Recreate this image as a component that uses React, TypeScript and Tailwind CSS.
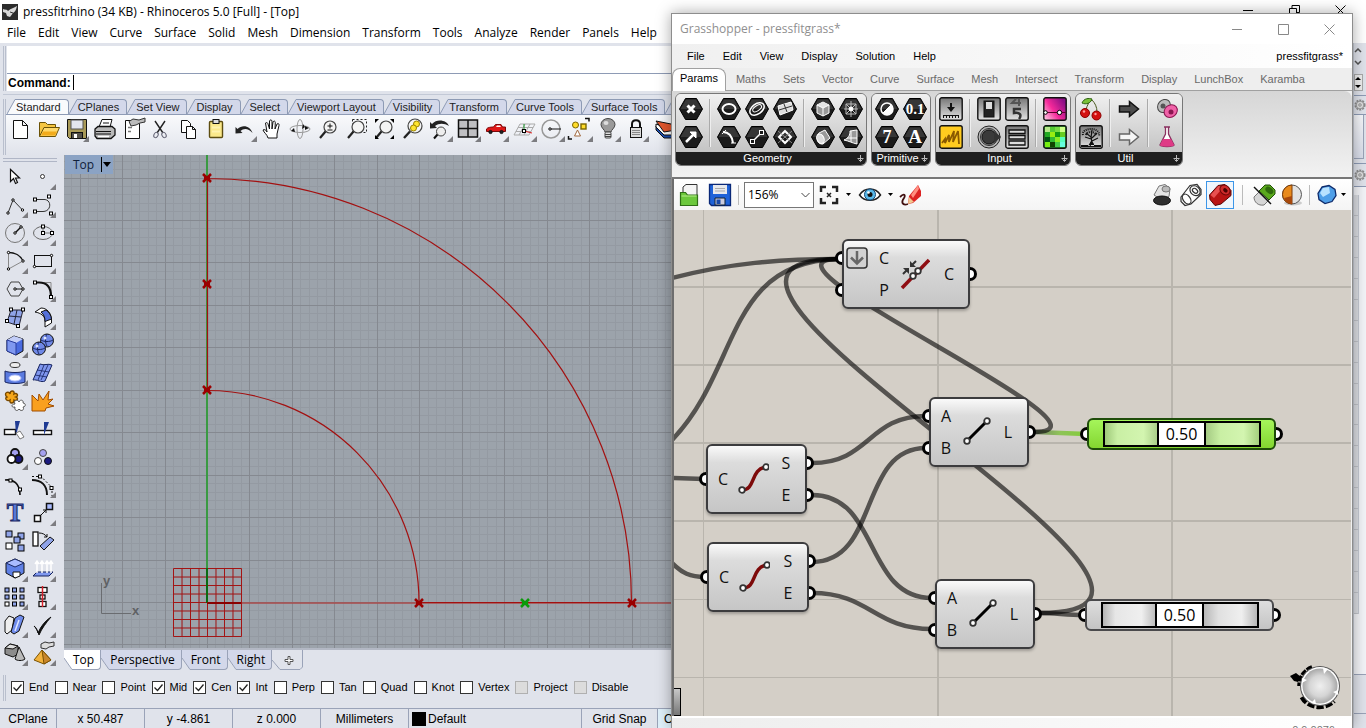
import React from "react";

const UI = "font-['Open_Sans','Noto_Sans',sans-serif]";
const ARIAL = "font-['Liberation_Sans',Arial,sans-serif]";

const Glyph: React.FC<{ children: React.ReactNode; more?: boolean }> = ({ children, more }) => (
  <svg viewBox="0 0 28 28" className="size-7 shrink-0" fill="none" stroke="#111" strokeWidth="1">
    {children}
    {more && <path d="M27 21v6h-6z" fill="#7c7c80" stroke="none" />}
  </svg>
);

interface Tool {
  name: string;
  icon: React.ReactNode;
  more?: boolean;
}

const sq = (x: number, y: number, fill = "#fff", s = 3) => (
  <rect x={x - s / 2} y={y - s / 2} width={s} height={s} fill={fill} stroke="#000" />
);
const dot = (x: number, y: number) => <circle cx={x} cy={y} r="1.2" fill="#fff" stroke="#000" />;

const lens = (
  <>
    <circle cx="16" cy="12" r="6" fill="#f4f4f4" stroke="#444" strokeWidth="1.2" />
    <path d="M11.500 16.500 6 23" stroke="#222" strokeWidth="2.2" />
  </>
);

const standardTools: Tool[] = [
  { name: "New", icon: <path d="M7.500 5.500h9l5 5v13h-14zM16.500 5.500v5h5" fill="#fff" /> },
  {
    name: "Open",
    icon: (
      <>
        <path d="M5.500 21.500v-14h6l2 2h8v3" fill="#f5c542" stroke="#6b5207" />
        <path d="M5.500 21.500 10 12.500h15.500l-4 9z" fill="#ffd96a" stroke="#6b5207" />
        <path d="M7 20.500h14l2-4H9z" fill="#f2ab1c" stroke="none" />
      </>
    ),
  },
  {
    name: "Save",
    more: true,
    icon: (
      <>
        <path d="M5.500 4.500h19v19h-17l-2-2z" fill="#a99a58" />
        <rect x="9" y="5" width="12" height="9" fill="#e3e6ee" stroke="#555" />
        <rect x="9.500" y="17.500" width="11" height="6" fill="#55524a" />
        <path d="M12 19v4h3v-4z" fill="#fff" stroke="none" />
      </>
    ),
  },
  {
    name: "Print",
    icon: (
      <>
        <path d="M9 12 12 4.500h10L20 12" fill="#fff" />
        <path d="M5 14 8 11.500h14l3 2.500v6l-4 3.500H7L5 21z" fill="#b9b9b9" strokeWidth="1.300" />
        <path d="M6 16.500h15M6 19h15M13 8h6" />
        <path d="M8 21.500h11" stroke="#fff" strokeWidth="1.500" />
      </>
    ),
  },
  {
    name: "Properties",
    icon: (
      <>
        <path d="M7.500 5.500h9v3h5v15h-14z" fill="#fff" />
        <path d="M11 6.500l4-2.500 6 1 6-2v4l-5 1-4 2-5 1z" fill="#bbb" stroke="#333" />
        <path d="M10 12.500h4M10 16.500h3" stroke="#777" strokeWidth="1.500" />
      </>
    ),
  },
  {
    name: "Cut",
    icon: (
      <>
        <path d="M9 6l8 12M19 6l-8 12" stroke="#222" strokeWidth="1.400" />
        <ellipse cx="10" cy="20" rx="2" ry="2.800" stroke="#667" transform="rotate(30 10 20)" />
        <ellipse cx="18" cy="20" rx="2" ry="2.800" stroke="#667" transform="rotate(-30 18 20)" />
      </>
    ),
  },
  {
    name: "Copy",
    icon: (
      <>
        <path d="M7.500 5.500h6l3 3v9h-9z" fill="#fff" />
        <path d="M12.500 11.500h6l3 3v9h-9zM18.500 11.500v3h3" fill="#fff" />
      </>
    ),
  },
  {
    name: "Paste",
    icon: (
      <>
        <rect x="7.500" y="6.500" width="13" height="16" rx="1" fill="#fbe98b" stroke="#5d4d10" strokeWidth="1.400" />
        <rect x="11" y="4.500" width="6" height="4" fill="#ddd" />
        <path d="M10 12.500h8M10 16.500h8" stroke="#fff3b0" strokeWidth="2" />
      </>
    ),
  },
  {
    name: "Undo",
    more: true,
    icon: <path d="M5.500 12v6.500l7-.5-2-2c3-3 8-3 12 2-2-7-10-9-15-4z" fill="#222" stroke="none" />,
  },
  {
    name: "Pan",
    icon: (
      <path
        d="M10 23c-1-4-4-5-5-8 1.500-1 3 0 4 2L7.500 8c1.500-1 2.300 0 2.500 1l1.500 5V6c.5-1.500 2-1.500 2.500 0v8l1-7c1-1.500 2.300-1 2.300.5L17 14l2-5c1.500-1 2.300 0 2 1.500L19 19v4z"
        fill="#fff"
      />
    ),
  },
  {
    name: "Rotate view",
    icon: (
      <>
        <ellipse cx="14" cy="14" rx="10" ry="3.500" stroke="#999" />
        <ellipse cx="14" cy="14" rx="3" ry="9.500" stroke="#999" />
        <path d="M23 13l-4-2v4zM17 9l-1 5 3-2zM5 16l4 1-1-4z" fill="#111" stroke="none" />
      </>
    ),
  },
  {
    name: "Zoom",
    icon: (
      <>
        {lens}
        <path d="M16 8.500v5M13.500 11h5M13.500 15h5" />
      </>
    ),
  },
  {
    name: "Zoom window",
    icon: (
      <>
        <rect x="10.500" y="4.500" width="14" height="13" strokeDasharray="2 2" stroke="#222" />
        {lens}
      </>
    ),
  },
  {
    name: "Zoom extents",
    icon: (
      <>
        {lens}
        <path d="M5 8V4h4zM20 4h4v4zM24 20v4h-4zM5 20v4h4z" fill="#000" stroke="none" />
      </>
    ),
  },
  {
    name: "Zoom selected",
    icon: (
      <>
        <circle cx="17" cy="11" r="7" fill="#f4f4f4" stroke="#444" strokeWidth="1.200" />
        <path d="M12 16.500 6 23" stroke="#222" strokeWidth="2.400" />
        <circle cx="18.500" cy="9" r="3" fill="#ffe52e" stroke="#9a8200" />
        <circle cx="15.500" cy="13" r="3" fill="#ffe52e" stroke="#9a8200" />
      </>
    ),
  },
  {
    name: "Undo view",
    more: true,
    icon: (
      <>
        <path d="M4 7v6.500l7-.5-2-2c4-3 9-3 14 0-2-6-12-8-17-2z" fill="#222" stroke="none" />
        <circle cx="15" cy="16.500" r="4.500" fill="#eee" stroke="#444" />
        <path d="M11.500 19.500 8 23.500" strokeWidth="2" />
      </>
    ),
  },
  {
    name: "Four viewports",
    more: true,
    icon: (
      <>
        <rect x="4.500" y="5" width="19" height="17" fill="#bfbfc2" strokeWidth="1.500" />
        <path d="M14 5v17M4.500 13.500h19" strokeWidth="1.500" />
      </>
    ),
  },
  {
    name: "Right view",
    more: true,
    icon: (
      <>
        <path d="M4.500 14c1-1.500 4-2 7-2l2-2.500h5.500l1.500 2.500h3v4.500h-19z" fill="#e01818" stroke="#7b0a0a" />
        <path d="M14 12l1-1.500h3l1 1.500z" fill="#fff" stroke="none" />
        <circle cx="8.500" cy="17" r="1.600" fill="#222" />
        <circle cx="19.500" cy="17" r="1.600" fill="#222" />
      </>
    ),
  },
  {
    name: "Set CPlane",
    more: true,
    icon: (
      <>
        <path d="M4 20 10 9h15l-6 11zM6 16.500h15M8 12.500h15M9 20l6-11M14 20l6-11" stroke="#aaa" />
        <path d="M14 16V9" stroke="#1f9a2c" />
        <path d="M14 16l8 2" stroke="#d22" />
        {sq(14, 16)}
      </>
    ),
  },
  {
    name: "Osnap",
    more: true,
    icon: (
      <>
        <circle cx="13" cy="14" r="9" stroke="#999" strokeWidth="1.500" />
        <path d="M12 14h11" />
        {dot(12, 14)}
      </>
    ),
  },
  {
    name: "Select",
    more: true,
    icon: (
      <>
        <circle cx="9.500" cy="10" r="3" fill="#ffdc2b" stroke="#7a6500" />
        <rect x="15" y="9" width="5" height="5" fill="#ffdc2b" stroke="#7a6500" strokeWidth="1.400" />
        <path d="M8.500 21l3-6 3 6z" stroke="#a0673c" fill="#fff" />
        <path d="M19 3.500h4v3M2.500 21v3h3.500" strokeWidth="1.500" />
      </>
    ),
  },
  {
    name: "Hide",
    more: true,
    icon: (
      <>
        <path d="M11 17c0-2-4-4-4-7.500a7 6 0 0 1 14 0C21 13 17 15 17 17z" fill="#9a9a9a" stroke="#444" />
        <ellipse cx="12" cy="8" rx="2.500" ry="2" fill="#ddd" stroke="none" />
        <rect x="11" y="17" width="6" height="6" rx="1" fill="#ddd" stroke="#444" />
        <path d="M11 19.500h6M11 21.500h6" stroke="#444" />
      </>
    ),
  },
  {
    name: "Lock",
    more: true,
    icon: (
      <>
        <path d="M10 13V9c0-5 8-5 8 0v4" strokeWidth="2" />
        <rect x="8.500" y="12.500" width="11" height="10" fill="#ddd" />
        <path d="M10 15.500h8M10 17.500h8M10 19.500h8" stroke="#888" />
      </>
    ),
  },
  {
    name: "Layers",
    icon: (
      <>
        <path d="M6 11v4l8 8h12v-5z" fill="#1a4cb0" />
        <path d="M6 9v3l8 8h12v-4z" fill="#fff" />
        <path d="M6 6l15 3 5 6-12 2z" fill="#e4572e" />
      </>
    ),
  },
];

const blue = "#8fa3e8";

const sideTools: Tool[] = [
  { name: "Pointer", icon: <path d="M9.500 6.500v12l3-3 2 5 2-1-2-4.500h4z" fill="#fff" strokeWidth="1.200" /> },
  { name: "Point", more: true, icon: <circle cx="13.500" cy="13.500" r="2" fill="#fff" stroke="#333" /> },
  {
    name: "Polyline",
    more: true,
    icon: (
      <>
        <path d="M7 22 12 9l9.500 10" stroke="#333" />
        {dot(7, 22)}
        {dot(12, 9)}
        {dot(21.500, 19)}
      </>
    ),
  },
  {
    name: "Curve",
    more: true,
    icon: (
      <>
        <path d="M6 8.500h8c9-1 9 12 0 12H6" stroke="#333" />
        {sq(6, 8.500)}
        {sq(20, 5.500)}
        {sq(6, 20.500)}
        {sq(22, 22.500)}
      </>
    ),
  },
  {
    name: "Circle",
    more: true,
    icon: (
      <>
        <circle cx="14" cy="14" r="9.500" stroke="#777" />
        <path d="M14 14l6-6" strokeWidth="1.400" />
        {dot(14, 14)}
        {dot(20, 8)}
      </>
    ),
  },
  {
    name: "Ellipse",
    more: true,
    icon: (
      <>
        <ellipse cx="14" cy="14" rx="9.500" ry="6.500" stroke="#666" />
        <path d="M14 7.500V14h9" stroke="#777" />
        {sq(14, 7.500)}
        {sq(14, 14)}
        {sq(23, 14)}
      </>
    ),
  },
  {
    name: "Arc",
    more: true,
    icon: (
      <>
        <path d="M7.500 22V5.500M7.500 22 22 14" stroke="#888" />
        <path d="M7.500 5.500c6 0 12 3 14.500 8.500" strokeWidth="1.400" />
        {dot(7.500, 5.500)}
        {dot(22, 14)}
        {dot(7.500, 22)}
      </>
    ),
  },
  {
    name: "Rectangle",
    more: true,
    icon: (
      <>
        <rect x="5.500" y="8.500" width="17" height="11" />
        {dot(22.500, 8.500)}
        {dot(5.500, 19.500)}
      </>
    ),
  },
  {
    name: "Polygon",
    more: true,
    icon: (
      <>
        <path d="M6 14l4-7h8l4 7-4 7h-8z" stroke="#444" />
        <path d="M14 14h8" />
        {dot(14, 14)}
        {dot(22, 14)}
      </>
    ),
  },
  {
    name: "Fillet",
    more: true,
    icon: (
      <>
        <path d="M6 7.500h16v15" stroke="#888" />
        <path d="M6 7.500h4c8 0 12 5 12 14" strokeWidth="2.200" />
        {sq(6, 7.500)}
        {sq(22, 22)}
      </>
    ),
  },
  {
    name: "Surface",
    more: true,
    icon: (
      <>
        <path d="M10 7h12l-4 16-12-4z" fill={blue} stroke="#223" />
        <path d="M16 7l-3 14M8 13l12 1" stroke="#223" />
        {sq(10, 6.500)}
        {sq(22, 6.500)}
        {sq(6, 18)}
        {sq(17, 23)}
      </>
    ),
  },
  {
    name: "Sweep",
    more: true,
    icon: (
      <>
        <path d="M6 9l6-4c6 0 10 5 10.500 11v4L16 24v-6c0-5-4-8-10-9z" fill="#fff" />
        <path d="M12 9l5-2c3 2 5 5 5.500 9L16 18.500c0-4-1-7-4-9.500z" fill="#5570d8" />
      </>
    ),
  },
  {
    name: "Box",
    more: true,
    icon: (
      <>
        <path d="M6 9l7-4 9 3v12l-7 4-9-4z" fill="#4a6be0" />
        <path d="M6 9l7-4 9 3-7 4z" fill="#c2cdf8" stroke="none" />
        <path d="M6 9l9 3v12l-9-4z" fill="#7f98f0" stroke="#2b3e9e" />
      </>
    ),
  },
  {
    name: "Boolean",
    more: true,
    icon: (
      <>
        <circle cx="18" cy="9.500" r="6.500" fill="#6f88e6" />
        <circle cx="10" cy="17.500" r="6.500" fill="#6f88e6" />
        <path d="M12 9c3 2 9 2 12 0M18 3c-2 3-2 9 0 12M4 17c3 2 9 2 12 0M10 11c-2 3-2 9 0 12" stroke="#16235f" />
        <circle cx="16" cy="7" r="1.500" fill="#dfe6ff" stroke="none" />
        <circle cx="8" cy="15" r="1.500" fill="#dfe6ff" stroke="none" />
      </>
    ),
  },
  {
    name: "Project",
    more: true,
    icon: (
      <>
        <ellipse cx="14" cy="6" rx="5" ry="2.500" stroke="#333" fill="#eee" />
        <path d="M4 12c4 2 16 2 20 0v11c-4 2-16 2-20 0z" fill="#5b7be0" stroke="#16235f" />
        <ellipse cx="14" cy="19" rx="6" ry="3" fill="#fff" stroke="#b9c6ff" />
      </>
    ),
  },
  {
    name: "Mesh",
    more: true,
    icon: (
      <>
        <path d="M11 5c4 2 8-1 12 1l-7 16c-4 2-8-2-12-1z" fill="#7f96ee" stroke="#16235f" />
        <path d="M8 11l12 2M6 16l12 2M15 6l-6 15M19 6l-7 15" stroke="#16235f" strokeWidth=".8" />
      </>
    ),
  },
  {
    name: "Join",
    icon: (
      <>
        <path
          d="M5 9c-2-4 3-5 4-2 0-4 5-4 4 0 3-2 5 2 2 3 3 1 1 5-2 3 0 4-5 4-4 0-3 2-6-2-3-3z"
          fill="#f7a81b"
          stroke="#7a4a00"
          strokeWidth="1.400"
        />
        <path d="M14 17c-2-4 3-5 4-2 1-3 5-2 4 1 3 0 3 4 0 4 2 3-2 5-4 2-2 3-5 1-4-2-4 1-4-3 0-3z" fill="#fff" stroke="#555" />
      </>
    ),
  },
  {
    name: "Explode",
    icon: (
      <path d="M3 8l6 6 1-7 4 6 6-9-1 9 5-1-5 5 6 2-8 2-1 3H3z" fill="#f9a01f" stroke="#a04c00" />
    ),
  },
  {
    name: "Trim",
    icon: (
      <>
        <rect x="3.500" y="14.500" width="11" height="5" fill="#fff" strokeWidth="1.400" />
        <path d="M14 6h5l-4 14z" fill="#1f3b93" stroke="none" />
        <path d="M15 18l4-2 4 6-4 2z" fill="#fff" stroke="#777" />
      </>
    ),
  },
  {
    name: "Split",
    icon: (
      <>
        <rect x="4.500" y="15.500" width="18" height="4" fill="#fff" strokeWidth="1.400" />
        <path d="M15 7h5l-5 13z" fill="#1f3b93" stroke="none" />
      </>
    ),
  },
  {
    name: "Group",
    more: true,
    icon: (
      <>
        <circle cx="14" cy="10" r="4" fill="#a4a0f0" strokeWidth="1.800" />
        <circle cx="17.500" cy="16" r="4" fill="#1b1b80" strokeWidth="1.800" />
        <circle cx="10.500" cy="16" r="4" fill="#fff" strokeWidth="1.800" />
      </>
    ),
  },
  {
    name: "Ungroup",
    icon: (
      <>
        <circle cx="14" cy="10" r="3.500" fill="#a4a0f0" stroke="#444" />
        <circle cx="19" cy="18" r="3.500" fill="#1b1b80" />
        <circle cx="9" cy="18" r="3.500" fill="#fff" stroke="#444" />
      </>
    ),
  },
  {
    name: "Edit points",
    icon: (
      <>
        <path d="M4 9c8-1 15 3 15 15" strokeWidth="1.600" />
        {sq(9.500, 9.500)}
        {sq(19, 18.500)}
      </>
    ),
  },
  {
    name: "Control points",
    more: true,
    icon: (
      <>
        <path d="M3 9c9 0 15 5 15 15" strokeWidth="2" />
        <path d="M3 5.500h9l11 11V25" strokeDasharray="2 2" />
        {sq(11, 5.500)}
        {sq(22.500, 17)}
      </>
    ),
  },
  {
    name: "Text",
    icon: (
      <text
        x="14"
        y="22"
        textAnchor="middle"
        fontSize="25"
        fontWeight="700"
        fontFamily="Liberation Serif, serif"
        fill="#5878d8"
        stroke="#1c2a66"
      >
        T
      </text>
    ),
  },
  {
    name: "Move",
    more: true,
    icon: (
      <>
        <rect x="17.500" y="4.500" width="6" height="6" fill="#a9bbff" strokeWidth="1.500" />
        <rect x="5.500" y="16.500" width="6" height="6" fill="#fff" strokeWidth="1.500" />
        <path d="M12 16l5-5M17 11v3M17 11h-3" />
      </>
    ),
  },
  {
    name: "Copy objects",
    icon: (
      <>
        {sq(8, 7, "#8fa3e8", 6)}
        {sq(20, 9, "#8fa3e8", 6)}
        {sq(16, 13, "#8fa3e8", 6)}
        {sq(8, 19, "#fff", 6)}
        {sq(20, 21, "#8fa3e8", 6)}
      </>
    ),
  },
  {
    name: "Rotate",
    icon: (
      <>
        <rect x="4" y="5" width="5" height="14" fill="#fff" strokeWidth="1.300" />
        <path d="M10 6c3 0 6 1 8 4M18 10V7M18 10h-3" />
        <path d="M11 19l10-9 4 3-10 10z" fill={blue} />
      </>
    ),
  },
  {
    name: "Solid edit",
    more: true,
    icon: (
      <>
        <path d="M5 8l9-4 9 4v10l-9 5-9-5z" fill="#5f80e6" />
        <path d="M5 8l9-4 9 4-9 4z" fill="#a9bbff" stroke="#1c2a66" />
        <path d="M12 17h7v4l-5 2-2-2z" fill="#fff" />
      </>
    ),
  },
  {
    name: "Project to CPlane",
    more: true,
    icon: (
      <>
        <path d="M4 21l4-4h16l-4 4z" fill="#7f98f0" stroke="#16235f" />
        <path d="M8 18V7M13 18V7M18 18V7M22 18V7M6 9l2-3 2 3M11 9l2-3 2 3M16 9l2-3 2 3M20 9l2-3 2 3" stroke="#fff" strokeWidth="1.500" />
      </>
    ),
  },
  {
    name: "Array",
    more: true,
    icon: (
      <>
        {[6, 13.500, 21].map((x) => (
          <React.Fragment key={x}>
            {sq(x, 7, blue, 4)}
            {sq(x, 14, blue, 4)}
            {sq(x, 21, x === 6 ? "#fff" : blue, 4)}
          </React.Fragment>
        ))}
      </>
    ),
  },
  {
    name: "Align",
    more: true,
    icon: (
      <>
        <rect x="9" y="4.500" width="9" height="5" fill="#fff" strokeWidth="1.300" />
        <rect x="11" y="12" width="5" height="4" fill="#fff" strokeWidth="1.300" />
        <rect x="10" y="18.500" width="7" height="5" fill="#fff" strokeWidth="1.300" />
        <path d="M13.500 3v21" stroke="#d6202a" strokeWidth="1.500" />
      </>
    ),
  },
  {
    name: "Flow",
    more: true,
    icon: (
      <>
        <path d="M4 10l4-5 5 2-2 12-5 4-2-2z" fill="#eee" />
        <path d="M14 7l5-3 4 2-5 14-5 3-3-2z" fill="#6f8cec" />
        <path d="M18 9l-4 11" stroke="#dfe6ff" strokeWidth="1.500" />
      </>
    ),
  },
  { name: "Check", more: true, icon: <path d="M5 15c2 1 3 4 4 7 3-7 7-12 13-16-5 6-9 11-12 18-1-4-3-7-5-9z" fill="#111" /> },
  {
    name: "Render",
    more: true,
    icon: (
      <>
        <path d="M4 9l5-4 8 2v8l-5 3-8-3z" fill="#8c8c8c" />
        <path d="M4 9l5-4 8 2-5 3z" fill="#ddd" />
        <path d="M18 8l6 12c-2 2-8 2-10 0z" fill="#b9b9b9" />
      </>
    ),
  },
  {
    name: "Properties panel",
    more: true,
    icon: (
      <>
        <path d="M5 21l8-10 9 10-7 4z" fill="#f2b23c" stroke="#7a5200" />
        <path d="M13 11l2 14 7-4z" fill="#c9862a" stroke="#7a5200" />
        <path d="M12 5l4-2 4 1 5-1v4l-5 1-3 2-5-1z" fill="#ddd" stroke="#333" />
      </>
    ),
  },
];

const rhinoMenu = ["File", "Edit", "View", "Curve", "Surface", "Solid", "Mesh", "Dimension", "Transform", "Tools", "Analyze", "Render", "Panels", "Help"];
const toolTabs = ["Standard", "CPlanes", "Set View", "Display", "Select", "Viewport Layout", "Visibility", "Transform", "Curve Tools", "Surface Tools", "Solid Tools"];
const viewTabs = ["Top", "Perspective", "Front", "Right"];

const osnaps = [
  { label: "End", on: true },
  { label: "Near", on: false },
  { label: "Point", on: false },
  { label: "Mid", on: true },
  { label: "Cen", on: true },
  { label: "Int", on: true },
  { label: "Perp", on: false },
  { label: "Tan", on: false },
  { label: "Quad", on: false },
  { label: "Knot", on: false },
  { label: "Vertex", on: false },
  { label: "Project", on: false, off: true },
  { label: "Disable", on: false, off: true },
];

const ToolTab: React.FC<{ label: string; active: boolean }> = ({ label, active }) => (
  <button className="flex h-[15px] shrink-0 text-[11px] leading-[14px] text-[#222]">
    <svg viewBox="0 0 9 15" className="h-[15px] w-[9px]" stroke="#8e9bb5">
      <path d="M0 15 8 .5h1V15z" fill={active ? "#f9fafc" : "#d3d8ea"} stroke="none" />
      <path d="M0 15 8 .5h1" fill="none" />
    </svg>
    <span
      className={`h-[15px] rounded-tr-[4px] border-t border-r border-[#8e9bb5] pr-[7px] ${
        active ? "bg-[#f9fafc]" : "bg-[#d3d8ea]"
      }`}
    >
      {label}
    </span>
  </button>
);

/* Top viewport: everything is in screen units, construction origin at 207,603 */
const STEP = 8.49;
const Cross: React.FC<{ x: number; y: number; color?: string }> = ({ x, y, color = "#9a0000" }) => (
  <path d={`M${x - 4} ${y - 4}l8 8M${x + 4} ${y - 4}l-8 8M${x - 3} ${y}h6`} stroke={color} strokeWidth="2.500" />
);

const Viewport: React.FC = () => {
  const minor: string[] = [];
  const major: string[] = [];
  for (let i = -17; i < 140; i++) {
    const x = Math.round(207 + i * STEP) + 0.5;
    (i % 5 === 0 ? major : minor).push(`M${x} 155V648`);
  }
  for (let j = -5; j < 53; j++) {
    const y = Math.round(603 - j * STEP) - 0.5;
    (j % 5 === 0 ? major : minor).push(`M64 ${y}H1353`);
  }
  const box = [-4, -3, -2, -1, 0, 1, 2, 3, 4];
  return (
    <svg className="block h-full w-full bg-[#9ca3ab]" fill="none">
      <g transform="translate(-64 -155)">
        <path d={minor.join("")} stroke="#949aa2" />
        <path d={major.join("")} stroke="#858990" />
        <path d="M207 155V603" stroke="#3a9a42" strokeWidth="2" />
        <path d="M207 603H1353" stroke="#a84a4a" strokeWidth="1.500" />
        {box.map((i) => (
          <path
            key={i}
            d={`M${207.5 + i * 8.5} 568.500v68M173.500 ${602.5 + i * 8.5}h68`}
            stroke="#a31515"
          />
        ))}
        <path d="M207 568V603" stroke="#0a6b12" strokeWidth="2" />
        <path d="M207 603H241" stroke="#8a0000" strokeWidth="2" />
        <path d="M207.500 178V390M207 390.500a212 212 0 0 1 212 212M207 178.500a424.500 424.500 0 0 1 424.500 424.500M419 602.500H632" stroke="#a31010" strokeWidth="1.200" />
        <Cross x={207} y={178} />
        <Cross x={207} y={284} />
        <Cross x={207} y={390} />
        <Cross x={419} y={603} />
        <Cross x={632} y={603} />
        <Cross x={525} y={603} color="#0a9a0a" />
        <path d="M101.500 583v30.500H131" stroke="#6a6c70" />
        <g fill="#5f6164" fontSize="13" fontWeight="700" fontFamily="Liberation Sans, sans-serif">
          <text x="103" y="585">y</text>
          <text x="132" y="615">x</text>
        </g>
      </g>
    </svg>
  );
};

const Gear = () => (
  <svg viewBox="0 0 14 14" className="size-3 shrink-0" fill="none" stroke="#8b8b8b">
    <circle cx="7" cy="7" r="5.500" strokeWidth="2" strokeDasharray="2.300 1.200" />
    <circle cx="7" cy="7" r="4.500" fill="#ddd" />
    <circle cx="7" cy="7" r="1.500" />
  </svg>
);

const Rhino: React.FC = () => (
  <div className="flex h-full flex-col bg-[#e0e3eb] text-black">
    <header className={`flex h-6 shrink-0 items-center bg-white pl-[2px] text-[12px] ${UI}`}>
      <svg viewBox="0 0 16 16" className="size-4">
        <rect width="16" height="16" fill="#2c2c2c" />
        <path d="M1 5c2 1 4 0 5 2 3-3 6-3 9-5-1 4-2 6-4 7l-3 4-3-1-1-3-3-1z" fill="#d9d9d9" />
        <path d="M8 8l3 1" stroke="#333" />
      </svg>
      <h1 className="ml-[5px] flex-1">pressfitrhino (34 KB) - Rhinoceros 5.0 [Full] - [Top]</h1>
      <div className="flex gap-[35px] pr-[20px] pb-[4px]">
        <button aria-label="Minimize"><svg viewBox="0 0 11 11" className="size-[11px]" stroke="#000"><path d="M0 5.500h10" /></svg></button>
        <button aria-label="Restore"><svg viewBox="0 0 11 11" className="size-[11px]" fill="none" stroke="#000"><path d="M.5 3.500h7v7h-7zM3 3V.500h7.500v7H8" /></svg></button>
        <button aria-label="Close"><svg viewBox="0 0 11 11" className="size-[11px]" stroke="#000"><path d="M.5.500l10 10M10.500.500l-10 10" /></svg></button>
      </div>
    </header>
    <nav className={`flex h-[19px] shrink-0 items-center gap-[12px] bg-white pb-[2px] pl-[7px] text-[12px] ${UI}`}>
      {rhinoMenu.map((item) => (
        <button key={item}>{item}</button>
      ))}
    </nav>
    <div className="flex min-h-0 flex-1">
      <main className={`flex min-w-0 flex-1 flex-col ${ARIAL}`}>
        {/* Command history and prompt */}
        <section className="mt-[3px] ml-[3px] flex h-[49px] shrink-0 border-b border-[#c3c9d6] pb-[3px]">
          <div className="mr-[1px] w-[3px] border-x border-[#b9bfcd]" />
          <div className="flex-1 bg-white">
            <div className="h-[28px] border-b border-[#8e9bb5]" />
            <div className="flex h-[17px] items-center pl-[1px] text-[12px]">
              <label htmlFor="command" className="font-bold">Command:</label>
              <span className="ml-[2px] h-[15px] w-px bg-black" />
              <input id="command" className="min-w-0 flex-1 outline-none" />
            </div>
          </div>
        </section>
        {/* Toolbar tabs */}
        <section className="ml-[3px] shrink-0 overflow-hidden pt-[4px]">
          <div className="flex">
            <div className="w-[3px] shrink-0 border-x border-[#b9bfcd]" />
            <div className="min-w-0 flex-1">
              <div className="flex h-[16px] items-end border-b border-[#8e9bb5] pl-px">
                {toolTabs.map((tab, i) => (
                  <ToolTab key={tab} label={tab} active={i === 0} />
                ))}
              </div>
              <div className="flex h-[40px] items-start bg-gradient-to-b from-[#f9fafc] to-[#e0e3eb]">
                {standardTools.map((tool) => (
                  <button key={tool.name} aria-label={tool.name}>
                    <Glyph more={tool.more}>{tool.icon}</Glyph>
                  </button>
                ))}
              </div>
            </div>
          </div>
        </section>
        <div className="flex min-h-0 flex-1">
          <aside className="w-16 shrink-0 pr-[7px] pl-px">
            <div className="mt-[3px] mb-[1px] ml-[2px] h-[4px] border-y border-[#b0b6c6]" />
            <div className="grid w-14 grid-cols-2">
              {sideTools.map((tool) => (
                <button key={tool.name} aria-label={tool.name}>
                  <Glyph more={tool.more}>{tool.icon}</Glyph>
                </button>
              ))}
            </div>
          </aside>
          <section className="relative flex min-w-0 flex-1 flex-col">
            <div className="min-h-0 flex-1 border-b-2 border-[#b3b8c4]">
              <Viewport />
            </div>
            <button className={`absolute top-0 left-px flex h-[19px] items-center bg-[#8ba3c4] pl-[8px] text-[12px] text-[#10203a] ${UI}`}>
              Top
              <span className="ml-[7px] h-[15px] w-px bg-black" />
              <svg viewBox="0 0 10 6" className="mr-px h-[6px] w-[10px]"><path d="M1 0h8L5 5z" /></svg>
            </button>
            <div className={`flex h-[20px] shrink-0 text-[12px] leading-[20px] ${UI}`}>
              {viewTabs.map((tab, i) => (
                <button key={tab} className="flex h-[20px]">
                  <svg viewBox="0 0 9 20" className="h-[20px] w-[9px]">
                    <path d="M0 0v8l8 11.500h1V0z" fill={i === 0 ? "#fff" : "#d3d8ea"} />
                    <path d="M0 8l8 11.500h1" fill="none" stroke="#9aa3b8" />
                  </svg>
                  <span className={`h-[20px] rounded-br-[4px] border-r border-b border-[#9aa3b8] pr-[6px] ${i === 0 ? "bg-white" : "bg-[#d3d8ea]"}`}>
                    {tab}
                  </span>
                </button>
              ))}
              <button aria-label="Add viewport" className="flex">
                <svg viewBox="0 0 31 20" className="h-[20px] w-[31px]" fill="none">
                  <path d="M0 10l8 9.500h20l2.500-2.500V0" stroke="#9aa3b8" />
                  <path d="M16 6.500h2v3h3v2h-3v3h-2v-3h-3v-2h3z" stroke="#555" fill="#fff" />
                </svg>
              </button>
            </div>
          </section>
        </div>
        {/* Object snaps */}
        <form className="flex h-[38px] shrink-0 items-center pb-[3px] pl-[3px] text-[11px]">
          <div className="mr-[5px] h-[26px] w-[3px] border-x border-[#b9bfcd]" />
          {osnaps.map((snap) => (
            <label key={snap.label} className="mr-[6px] flex items-center gap-[5px]">
              <span className="relative flex">
                <input
                  type="checkbox"
                  defaultChecked={snap.on}
                  disabled={snap.off}
                  className="peer size-[13px] appearance-none border border-[#333] bg-white disabled:border-[#b0b0b0] disabled:bg-[#dcdcdc]"
                />
                <svg viewBox="0 0 13 13" className="pointer-events-none absolute inset-0 hidden size-[13px] peer-checked:block" fill="none" stroke="#222">
                  <path d="M2.500 6.500l3 3 5-6" strokeWidth="1.300" />
                </svg>
              </span>
              {snap.label}
            </label>
          ))}
        </form>
        <footer className="grid h-[20px] shrink-0 grid-cols-[57px_88px_88px_88px_88px_173px_76px_1fr] border-t border-[#9aa3b8] text-center text-[12px] leading-[20px]">
          <span className="border-r border-[#9aa3b8]">CPlane</span>
          <span className="border-r border-[#9aa3b8]">x 50.487</span>
          <span className="border-r border-[#9aa3b8]">y -4.861</span>
          <span className="border-r border-[#9aa3b8]">z 0.000</span>
          <span className="border-r border-[#9aa3b8]">Millimeters</span>
          <span className="flex items-center gap-[2px] border-r border-[#9aa3b8] pl-[3px]">
            <i className="size-[14px] bg-black" />
            Default
          </span>
          <button className="border-r border-[#9aa3b8]">Grid Snap</button>
          <button className="bg-[#dff0fa] pl-[6px] text-left">Ortho</button>
        </footer>
      </main>
      {/* Edge of the docked panels */}
      <aside className="flex w-[13px] shrink-0 flex-col border-l border-[#c5c9d3]">
        <div className="flex h-[27px] flex-col items-start justify-between py-[5px]">
          <svg viewBox="0 0 8 5" className="h-[5px] w-[8px]" fill="none" stroke="#555" strokeWidth="1.500"><path d="M1 4l3-3 3 3" /></svg>
          <svg viewBox="0 0 8 5" className="h-[5px] w-[8px]" fill="none" stroke="#555" strokeWidth="1.500"><path d="M1 1l3 3 3-3" /></svg>
        </div>
        <div className="mt-[4px] mr-[3px] flex h-[17px] flex-col items-start justify-around border border-[#aaa] bg-[#eee]">
          <svg viewBox="0 0 6 3" className="h-[3px] w-[6px]"><path d="M0 3l3-3 3 3z" /></svg>
          <svg viewBox="0 0 6 3" className="h-[3px] w-[6px]"><path d="M0 0l3 3 3-3z" /></svg>
        </div>
        <div className="mt-[4px] flex h-[20px] items-center border-y border-[#8e9bb5]"><Gear /></div>
        <div className="mr-[2px] h-[44px] border-r border-b border-[#9aa3b8] bg-gradient-to-b from-[#f7f8fb] to-[#d9ddea]" />
        <div className="mt-[4px] flex h-[24px] items-center border-y border-[#8e9bb5]"><Gear /></div>
        <div className="flex min-h-0 flex-1 bg-[#f3f4f8]">
          <div className="mt-[8px] mb-[60px] flex w-[5px] flex-col border-r border-[#c5c9d3] bg-[#dcdee3]">
            {["a", "b", "c", "d", "e", "f", "g", "h", "i", "j", "k", "l", "m", "n", "o", "p", "q", "r", "s", "t"].map((k) => (
              <div key={k} className="min-h-0 flex-1 border-b border-[#c2c4ca]" />
            ))}
          </div>
        </div>
        <div className="h-[40px] border-y border-[#9aa3b8]" />
        <div className="h-[14px]" />
      </aside>
    </div>
  </div>
);

/* ---- Grasshopper ---- */

const Hex: React.FC<{ children: React.ReactNode }> = ({ children }) => (
  <>
    <path d="M.5 12 6.500 1.500h11l6 10.500-6 10.500h-11z" fill="#1b1b1b" stroke="#000" />
    <path d="M1.500 12 7 2.500h10l5.500 9.500z" fill="#4a4a4a" stroke="none" opacity=".6" />
    {children}
  </>
);

const Tile: React.FC<{ fill: string; children?: React.ReactNode }> = ({ fill, children }) => (
  <>
    <rect x=".8" y=".8" width="22.400" height="22.400" rx="2" fill={fill} stroke="#111" strokeWidth="1.400" />
    {children}
  </>
);

const hexText = (t: string, size: number) => (
  <text x="12" y={12 + size * 0.34} textAnchor="middle" fontSize={size} fontWeight="700" fontFamily="Liberation Serif, serif" fill="#fff" stroke="none">
    {t}
  </text>
);

const greens = ["#b6e88a", "#5c3", "#7d4", "#cf8", "#2a2", "#9e1", "#191", "#6c2", "#051", "#3b3", "#8e2", "#5fb", "#7e1", "#140", "#4c4", "#6fd"];

interface Group {
  title: string;
  parts: { name: string; icon: React.ReactNode }[][][];
}

// each group is a list of blocks, each block a list of [upper, lower] columns
const groups: Group[] = [
  {
    title: "Geometry",
    parts: [
      [
        [
          { name: "Point", icon: <Hex><path d="M8.500 8.500l7 7M15.500 8.500l-7 7" strokeWidth="3" /></Hex> },
          { name: "Vector", icon: <Hex><path d="M7 17l7-7" strokeWidth="2.500" /><path d="M11 7h6v6z" fill="#fff" /></Hex> },
        ],
      ],
      [
        [
          { name: "Circle", icon: <Hex><ellipse cx="12" cy="12" rx="6.500" ry="5" strokeWidth="2" /></Hex> },
          { name: "Arc", icon: <Hex><path d="M6 7c6 0 9 4 10 11" strokeWidth="2" /><path d="M5 9l4-4M14 18h5" /></Hex> },
        ],
        [
          { name: "Curve", icon: <Hex><ellipse cx="12" cy="12" rx="8" ry="5" transform="rotate(-35 12 12)" strokeWidth="1.500" /><ellipse cx="12.500" cy="11.500" rx="5" ry="2.500" transform="rotate(-35 12 12)" /></Hex> },
          { name: "Line", icon: <Hex><path d="M7.500 16.500l9-9" strokeWidth="1.500" /><rect x="5.500" y="14.500" width="4" height="4" fill="#1b1b1b" /><rect x="14.500" y="5.500" width="4" height="4" fill="#1b1b1b" /></Hex> },
        ],
        [
          { name: "Plane", icon: <Hex><path d="M5 9l13-4 2 8-13 5z" fill="#ddd" /><path d="M11 7l3 8M6 13l13-4" stroke="#333" /></Hex> },
          { name: "Rectangle", icon: <Hex><path d="M12 6l6 6-6 6-6-6z" strokeWidth="2" /><path d="M5 6l14 12M19 6 5 18" stroke="#888" /></Hex> },
        ],
      ],
      [
        [
          { name: "Box", icon: <Hex><path d="M6 8l6-3 6 3v8l-6 3-6-3z" fill="#999" /><path d="M6 8l6-3 6 3-6 3z" fill="#e4e4e4" stroke="none" /><path d="M6 8l6 3 6-3M12 11v8" /></Hex> },
          { name: "Brep", icon: <Hex><path d="M8 8l6-3 5 8-7 6c-5 1-8-6-4-11z" fill="#999" /><ellipse cx="9.500" cy="14" rx="3.500" ry="5" fill="#ddd" transform="rotate(-25 9 14)" /></Hex> },
        ],
        [
          { name: "Mesh", icon: <Hex><path d="M7 7h10v10H7zM12 4v16M5 12h14M7 7l10 10M17 7 7 17" stroke="#bbb" /><circle cx="12" cy="12" r="2" fill="#fff" /></Hex> },
          { name: "Surface", icon: <Hex><path d="M5 15c5-2 6-5 6-9l7-1v14c-5-1-8-3-13-4z" fill="#999" /><path d="M12 6v11M8 13h10" /></Hex> },
        ],
      ],
    ],
  },
  {
    title: "Primitive",
    parts: [
      [
        [
          { name: "Boolean", icon: <Hex><circle cx="12" cy="12" r="6" strokeWidth="1.500" /><path d="M8 16a5.600 5.600 0 0 0 8-8z" fill="#fff" /></Hex> },
          { name: "Integer", icon: <Hex>{hexText("7", 18)}</Hex> },
        ],
        [
          { name: "Number", icon: <Hex>{hexText("0.1", 15)}</Hex> },
          { name: "Text", icon: <Hex>{hexText("A", 19)}</Hex> },
        ],
      ],
    ],
  },
  {
    title: "Input",
    parts: [
      [
        [
          { name: "Number slider", icon: <Tile fill="url(#steel)"><path d="M12 6v5" stroke="#111" strokeWidth="2" /><path d="M8 10h8l-4 5z" fill="#111" stroke="none" /><path d="M4 18.500h16M4.500 18v3M7.500 18v3M10.500 18v3M13.500 18v3M16.500 18v3M19.500 18v3" stroke="#111" /></Tile> },
          { name: "Graph", icon: <Tile fill="#ffcb1f"><path d="M3 18l3-4v4l4-8v7l5-11-1 11 5-11 1 13" stroke="#8a5a00" strokeWidth="1.800" /></Tile> },
        ],
      ],
      [
        [
          { name: "Toggle", icon: <Tile fill="url(#steel)"><rect x="7" y="4" width="10" height="16" fill="#222" stroke="#111" /><rect x="9" y="5" width="6" height="7" fill="#ddd" stroke="none" /></Tile> },
          { name: "Knob", icon: <><circle cx="12" cy="12" r="11" fill="#b5b5b5" stroke="#222" /><circle cx="12" cy="12" r="8.500" fill="#999" stroke="#333" /><circle cx="12" cy="12" r="7" fill="#3a3a3a" stroke="#111" /><path d="M17 6l7 6-7 6z" fill="#333" stroke="none" /></> },
        ],
        [
          { name: "Scroller", icon: <Tile fill="url(#steel)"><path d="M11 2 7 6h9M14 2v7" stroke="#555" strokeWidth="2" /><path d="M16 12H9v4c6-1 8 2 5 6" stroke="#333" strokeWidth="2.500" /></Tile> },
          { name: "Value list", icon: <Tile fill="url(#steel)"><path d="M4 5h16v3.500H4zM4 10.500h16V14H4zM4 16h16v4H4z" fill="#ddd" stroke="#111" strokeWidth="1.300" /></Tile> },
        ],
      ],
      [
        [
          { name: "Gradient", icon: <Tile fill="url(#pink)"><path d="M1 15.500h22" stroke="#600030" /><circle cx="2.500" cy="15.500" r="1.800" fill="#fff" stroke="#000" /><circle cx="16.500" cy="15.500" r="2.200" fill="#fff" stroke="#000" /></Tile> },
          { name: "Image sampler", icon: <Tile fill="#3a3">{greens.map((c, i) => <rect key={c} x={2 + (i % 4) * 5} y={2 + Math.floor(i / 4) * 5} width="5" height="5" fill={c} stroke="none" />)}</Tile> },
        ],
      ],
    ],
  },
  {
    title: "Util",
    parts: [
      [
        [
          { name: "Cherry picker", icon: <><path d="M7 13c1-5 3-8 6-10M18 15c0-5-2-9-5-12" stroke="#4a5a20" /><path d="M3 6c2-5 7-5 10-4-1 4-6 6-10 4z" fill="#7ac03a" stroke="#2c6010" /><circle cx="6" cy="16" r="4.500" fill="#d31212" stroke="#8a0000" /><circle cx="17.500" cy="18.500" r="4.500" fill="#d31212" stroke="#8a0000" /><circle cx="5" cy="14.500" r="1.200" fill="#ff9c9c" stroke="none" /><circle cx="16.500" cy="17" r="1.200" fill="#ff9c9c" stroke="none" /></> },
          { name: "Tree", icon: <Tile fill="url(#steel)"><path d="M11 21c2-3 2-6 1-9L7 8m5 5 1-8m0 8 5-5m-5 8 6-3M12 14l-6-2" stroke="#111" strokeWidth="1.200" /><path d="M4 10c-1-4 4-6 8-6s9 2 8 7M7 10c1-4 9-4 10 0" stroke="#111" strokeWidth="2" strokeDasharray="1 1" /><path d="M9 21h6v-2l-2-3h-1zM2 22v-2h20v2z" fill="#111" stroke="none" /></Tile> },
        ],
      ],
      [
        [
          { name: "Relay", icon: <path d="M2.500 9h10V4.500L21.500 12l-9 7.500V15h-10z" fill="#4c4c4c" stroke="#111" strokeWidth="1.500" /> },
          { name: "Data output", icon: <path d="M2.500 9h10V4.500L21.500 12l-9 7.500V15h-10z" fill="#f6f6f6" stroke="#666" strokeWidth="1.500" /> },
        ],
      ],
      [
        [
          { name: "Galapagos", icon: <><ellipse cx="9" cy="9" rx="6" ry="7" transform="rotate(40 9 9)" fill="#bbb" stroke="#444" /><circle cx="8" cy="9" r="2.500" fill="#555" stroke="none" /><ellipse cx="15.500" cy="14.500" rx="7" ry="6" transform="rotate(-40 15 14)" fill="#f062a8" stroke="#8a1650" /><circle cx="16" cy="15" r="2.500" fill="#8a1650" stroke="none" /></> },
          { name: "Octopus", icon: <><path d="M9 2h6M10.500 2v7L5 20c0 2 14 2 14 0L13.500 9V2" fill="#fff" stroke="#8a3060" strokeWidth="1.300" /><path d="M8 14h8l3 6c0 2-14 2-14 0z" fill="#df3a86" stroke="none" /></> },
        ],
      ],
    ],
  },
];

const ghMenu = ["File", "Edit", "View", "Display", "Solution", "Help"];
const ghTabs = ["Maths", "Sets", "Vector", "Curve", "Surface", "Mesh", "Intersect", "Transform", "Display", "LunchBox", "Karamba"];

const Port: React.FC<{ side: "in" | "out" }> = ({ side }) => (
  <i
    className={`absolute top-1/2 h-[14px] w-[7px] -translate-y-1/2 border-[3px] border-black bg-white ${
      side === "in" ? "-left-[9px] rounded-l-full border-r-0" : "-right-[9px] rounded-r-full border-l-0"
    }`}
  />
);

interface NodeProps {
  place: string;
  inputs: string[];
  outputs: string[];
  icon: React.ReactNode;
  graft?: boolean;
}

const GraphNode: React.FC<NodeProps> = ({ place, inputs, outputs, icon, graft }) => (
  <div
    className={`absolute flex h-[70px] rounded-md border-2 border-[#3c3c3e] bg-gradient-to-b from-[#fafafa] via-[#dcdcdc] via-25% to-[#c6c6c6] py-px text-center text-[16px] text-[#111] shadow-[0_2px_3px_rgba(0,0,0,0.25)] ${place}`}
  >
    <div className={`flex shrink-0 flex-col ${graft ? "w-[54px]" : "w-[30px]"}`}>
      {inputs.map((name, i) => (
        <div key={name} className={`relative flex flex-1 items-center justify-center ${graft ? "pl-[26px]" : ""}`}>
          <Port side="in" />
          {graft && i === 0 && (
            <svg viewBox="0 0 22 22" className="absolute left-[2px] size-[22px]" fill="none" stroke="#666">
              <rect x="1" y="1" width="20" height="20" rx="3" fill="#d2d2d2" stroke="#333" strokeWidth="1.500" />
              <path d="M11 4v13M5 10.500l6 6 6-6" strokeWidth="2.500" />
            </svg>
          )}
          {name}
        </div>
      ))}
    </div>
    <div className="flex min-w-0 flex-1 items-center justify-center">
      <svg viewBox="0 0 32 32" className="size-8 shrink-0" fill="none">
        {icon}
      </svg>
    </div>
    <div className="flex w-[38px] shrink-0 flex-col">
      {outputs.map((name) => (
        <div key={name} className="relative flex flex-1 items-center justify-center">
          <Port side="out" />
          {name}
        </div>
      ))}
    </div>
  </div>
);

const end = (x: number, y: number) => <circle cx={x} cy={y} r="2.800" fill="#fff" stroke="#333" strokeWidth="1.800" />;

const curveIcon = (
  <>
    <path d="M5 27c14 0 8-21 24-23" stroke="#7d0a0a" strokeWidth="3.500" />
    {end(5, 27)}
    {end(29, 4)}
  </>
);
const lineIcon = (
  <>
    <path d="M8 25 28 5" stroke="#000" strokeWidth="3" />
    {end(8, 25)}
    {end(28, 5)}
  </>
);
const closestIcon = (
  <>
    <path d="M4 30 31 2" stroke="#8f0d12" strokeWidth="3.500" />
    <path d="M5 16l4-4M18 3l-4 4" stroke="#333" strokeWidth="2" />
    <path d="M5 10h6v6zM12 3v6h6z" fill="#333" />
    {end(15, 18)}
    {end(20, 13)}
  </>
);

interface SliderProps {
  id: string;
  place: string;
  selected?: boolean;
}

const NumberSlider: React.FC<SliderProps> = ({ id, place, selected }) => (
  <div
    className={`absolute flex h-8 w-[189px] justify-center rounded-md border-2 py-[2px] ${
      selected
        ? "border-[#1f4d0a] bg-gradient-to-b from-[#a5f55a] to-[#84d62f]"
        : "border-[#4a4a4c] bg-gradient-to-b from-[#dedede] to-[#c4c4c4]"
    } ${place}`}
  >
    <Port side="in" />
    <label
      htmlFor={id}
      aria-label="Value"
      className={`flex h-[26px] w-[158px] -translate-y-px justify-center border-2 border-black ${
        selected
          ? "bg-[linear-gradient(90deg,#9fc97a,#c9efa4_8%,#d3f5b0_25%,#8fb56f_40%,#8fb56f_60%,#c9efa4_75%,#d3f5b0_90%,#a5d07e)]"
          : "bg-[linear-gradient(90deg,#b4b4b4,#e6e6e6_8%,#efefef_25%,#a6a6a6_38%,#a0a0a0_60%,#e0e0e0_75%,#efefef_90%,#b8b8b8)]"
      }`}
    >
      <input
        id={id}
        defaultValue="0.50"
        className="w-[49px] border-x-2 border-black bg-white text-center text-[16px] leading-[20px] outline-none"
      />
    </label>
    <Port side="out" />
  </div>
);

const Canvas: React.FC = () => (
  <div className={`relative mr-px min-h-0 flex-1 overflow-hidden border-l-2 border-[#6e6e6e] bg-[#d4cfc7] ${UI}`}>
    <svg className="absolute inset-0 h-full w-full" fill="none">
      <defs>
        <linearGradient id="picked" gradientUnits="userSpaceOnUse" x1="1035" y1="0" x2="1084" y2="0">
          <stop offset="0" stopColor="#77836a" />
          <stop offset=".5" stopColor="#8fc358" />
          <stop offset="1" stopColor="#84cc3c" />
        </linearGradient>
      </defs>
      <g transform="translate(-674 -210)">
        <g stroke="#b9b5ad">
          <path d="M703.500 210V720M674 599.500H1360M674 677.500H1360" />
          <path d="M938 210V720M1172 210V720M674 287H1360M674 365H1360M674 443H1360M674 521H1360" strokeWidth="2" />
        </g>
        <path d="M1035 432L1086 434" stroke="url(#picked)" strokeWidth="4.500" />
        <g stroke="#000" strokeOpacity=".6" strokeWidth="4.500">
          <path d="M672 278C730 263 780 259 838 259" />
          <path d="M672 440C740 370 725 262 838 259" />
          <path d="M1040 613C1280 613 598 259 838 259" />
          <path d="M1034 432C1136 432 736 259 838 259" />
          <path d="M812 463C870 463 868 416 926 416" />
          <path d="M812 562C880 562 858 448 926 448" />
          <path d="M812 495C880 495 864 598 932 598" />
          <path d="M812 593C870 593 874 629 932 629" />
          <path d="M672 478L704 479" />
          <path d="M672 563C682 573 690 577 705 577" />
          <path d="M1040 613C1056 613 1066 615 1084 615" />
        </g>
      </g>
    </svg>
    <GraphNode place="left-[168px] top-[29px] w-[128px]" inputs={["C", "P"]} outputs={["C"]} icon={closestIcon} graft />
    <GraphNode place="left-[255px] top-[187px] w-[100px]" inputs={["A", "B"]} outputs={["L"]} icon={lineIcon} />
    <GraphNode place="left-[32px] top-[234px] w-[101px]" inputs={["C"]} outputs={["S", "E"]} icon={curveIcon} />
    <GraphNode place="left-[33px] top-[332px] w-[102px]" inputs={["C"]} outputs={["S", "E"]} icon={curveIcon} />
    <GraphNode place="left-[261px] top-[369px] w-[100px]" inputs={["A", "B"]} outputs={["L"]} icon={lineIcon} />
    <NumberSlider id="slider-a" place="left-[413px] top-[208px]" selected />
    <NumberSlider id="slider-b" place="left-[411px] top-[389px]" />
    <div className="absolute bottom-0 left-0 h-[28px] w-[7px] border border-l-0 border-black bg-gradient-to-b from-[#c8c8c8] to-[#777]" />
    <svg viewBox="0 0 54 46" className="absolute right-[7px] bottom-[6px] h-[46px] w-[54px]">
      <defs>
        <radialGradient id="knob">
          <stop offset="0" stopColor="#efefef" />
          <stop offset=".6" stopColor="#d5d5d5" />
          <stop offset="1" stopColor="#a8a8a8" />
        </radialGradient>
      </defs>
      <path d="M0 12l6-3 5 4-3 5-4-1z" fill="#000" />
      <path d="M22 3c-8 3-13 10-13 19" fill="none" stroke="#000" strokeWidth="3.500" strokeDasharray="6 1" />
      <path d="M12 33c6 11 22 13 32 4" fill="none" stroke="#000" strokeWidth="5" strokeDasharray="7 2" />
      <circle cx="30" cy="22" r="20" fill="#555" />
      <circle cx="30" cy="22" r="19" fill="#fff" />
      <circle cx="30" cy="22" r="17.500" fill="url(#knob)" />
      <path d="M33 4l5 1-4 5zM48 26l-5 2 5 3zM26 40l-1-5-4 4zM12 14l5 2-5 3z" fill="#fff" />
    </svg>
  </div>
);

const Grasshopper: React.FC = () => (
  <section className="absolute top-[13px] right-[13px] bottom-0 left-[671px] flex flex-col border border-b-0 border-[#8d8d8d] bg-[#f0f0f0] shadow-[0_0_14px_rgba(0,0,0,0.35)]">
    <svg className="absolute size-0">
      <defs>
        <linearGradient id="steel" x1="0" y1="0" x2="0" y2="1">
          <stop offset="0" stopColor="#777" />
          <stop offset="1" stopColor="#e4e4e4" />
        </linearGradient>
        <linearGradient id="pink" x1="0" y1="1" x2="1" y2=".3">
          <stop offset="0" stopColor="#ffd7ea" />
          <stop offset=".5" stopColor="#f5299a" />
          <stop offset="1" stopColor="#8a0f86" />
        </linearGradient>
      </defs>
    </svg>
    <header className={`flex h-[30px] shrink-0 items-center bg-white pl-[8px] text-[12px] text-[#8f8f8f] ${UI}`}>
      <h2 className="flex-1">Grasshopper - pressfitgrass*</h2>
      <div className="flex gap-[35px] pr-[17px]">
        <button aria-label="Minimize"><svg viewBox="0 0 11 11" className="size-[11px]" stroke="#888"><path d="M0 5.500h10" /></svg></button>
        <button aria-label="Maximize"><svg viewBox="0 0 11 11" className="size-[11px]" fill="none" stroke="#888"><path d="M.5.500h10v10H.5z" /></svg></button>
        <button aria-label="Close"><svg viewBox="0 0 11 11" className="size-[11px]" stroke="#888"><path d="M.5.500l10 10M10.500.500l-10 10" /></svg></button>
      </div>
    </header>
    <nav className={`flex h-6 shrink-0 items-center gap-[18px] bg-gradient-to-r from-[#f0f0f0] to-white pr-[9px] pl-[15px] text-[11px] ${ARIAL}`}>
      {ghMenu.map((item) => (
        <button key={item}>{item}</button>
      ))}
      <span className="ml-auto">pressfitgrass*</span>
    </nav>
    <nav className={`flex h-[23px] shrink-0 items-stretch bg-[#eee] text-[11px] text-[#6a6a6a] ${ARIAL}`}>
      <button className="rounded-t-lg border border-b-0 border-[#a0a0a0] bg-white px-[7px] pb-[3px] text-black">Params</button>
      <div className="flex flex-1 gap-[17px] border-b border-[#a0a0a0] pl-[10px]">
        {ghTabs.map((tab) => (
          <button key={tab}>{tab}</button>
        ))}
      </div>
    </nav>
    <div className="flex h-[88px] shrink-0 items-start gap-[4px] rounded-tr-lg border-b-2 border-[#777] bg-gradient-to-b from-[#d6d6d6] to-[#f2f2f2] pt-[2px] pl-[3px]">
      {groups.map((group) => (
        <section key={group.title} className="overflow-hidden rounded-md border border-[#777]">
          <div className="flex h-[58px] items-center bg-gradient-to-b from-[#f0f0f0] to-[#c4c4c4] px-px">
            {group.parts.map((block, b) => (
              <React.Fragment key={b}>
                {b > 0 && <div className="mx-[4px] h-[48px] w-[2px] border-l border-[#aaa] bg-[#eee]" />}
                {block.map((column) => (
                  <div key={column[0].name} className="flex flex-col gap-[4px] px-[2px]">
                    {column.map((item) => (
                      <button key={item.name} aria-label={item.name}>
                        <svg viewBox="0 0 24 24" className="size-6" fill="none" stroke="#fff">
                          {item.icon}
                        </svg>
                      </button>
                    ))}
                  </div>
                ))}
              </React.Fragment>
            ))}
          </div>
          <div className={`flex h-[13px] items-center bg-[#1e1e1e] px-[2px] text-[11px] leading-[13px] text-white ${ARIAL}`}>
            <h3 className="flex-1 text-center">{group.title}</h3>
            <svg viewBox="0 0 7 7" className="size-[7px]" fill="none" stroke="#bbb"><path d="M3.500 0v6M.5 3.500h6M1.500 4.500l2 2 2-2" /></svg>
          </div>
        </section>
      ))}
    </div>
    <div className="flex h-[31px] shrink-0 items-center border-l-2 border-[#6e6e6e] bg-gradient-to-b from-white to-[#f4f4f4] pr-[6px] pl-[4px]">
      <button aria-label="Open">
        <svg viewBox="0 0 24 24" className="size-6" fill="none">
          <path d="M5 21V4l3-2.500h11V21" fill="#f4f4f4" stroke="#333" />
          <path d="M2.500 22.500v-13h5l2 2.500h10v10.500z" fill="#6cc83c" stroke="#2f6f16" strokeWidth="1.200" />
          <path d="M3.500 13h15" stroke="#b8ee8c" />
        </svg>
      </button>
      <button aria-label="Save" className="ml-[6px]">
        <svg viewBox="0 0 24 24" className="size-6" fill="none">
          <path d="M1.500 1.500h21v21h-19l-2-2z" fill="#1e62d8" stroke="#0a2878" strokeWidth="1.300" />
          <path d="M5 2h14v9H5z" fill="#e6e8ec" />
          <path d="M7 5.500h10M7 8h10" stroke="#aaa" />
          <path d="M7 15h10v7H7z" fill="#ccd" stroke="#123" />
          <path d="M8.500 16.500h4v4.500h-4z" fill="#1748a8" />
        </svg>
      </button>
      <div className="mr-[5px] ml-[6px] h-5 w-px bg-[#bbb]" />
      <div className="relative flex items-center">
        <select
          aria-label="Zoom"
          className={`h-[26px] w-[70px] appearance-none border border-[#777] bg-white pl-[3px] text-[12px] text-black ${UI}`}
        >
          <option>156%</option>
        </select>
        <svg viewBox="0 0 9 6" className="pointer-events-none absolute right-[4px] h-[6px] w-[9px]" fill="none" stroke="#444"><path d="M.5 1l4 4 4-4" /></svg>
      </div>
      <button aria-label="Zoom extents" className="ml-[3px] flex items-center gap-[5px]">
        <svg viewBox="0 0 24 24" className="size-6" fill="none" stroke="#222">
          <path d="M4 9V4H9M15 4h5V9M20 15v5H15M9 20H4V15" strokeWidth="2.500" />
          <path d="M10 10l4 4M14 10l-4 4" strokeWidth="1.500" />
        </svg>
        <svg viewBox="0 0 5 3" className="h-[3px] w-[5px]"><path d="M0 0h5L2.500 3z" /></svg>
      </button>
      <button aria-label="Preview" className="ml-[7px] flex items-center gap-[6px]">
        <svg viewBox="0 0 24 24" className="size-6" fill="none">
          <path d="M1.500 12c5-8 16-8 21 0-5 7-16 7-21 0z" fill="#fff" stroke="#222" strokeWidth="1.500" />
          <circle cx="12" cy="11.500" r="5.500" fill="#58b8e8" stroke="#134a78" />
          <circle cx="12" cy="11.500" r="2.500" fill="#111" />
          <circle cx="10.500" cy="9.500" r="1.300" fill="#fff" />
        </svg>
        <svg viewBox="0 0 5 3" className="h-[3px] w-[5px]"><path d="M0 0h5L2.500 3z" /></svg>
      </button>
      <button aria-label="Sketch" className="ml-[6px]">
        <svg viewBox="0 0 24 24" className="size-6" fill="none">
          <path d="M1 14c4-4 6-2 4 1-3 4-2 8 4 6" stroke="#401010" strokeWidth="1.800" />
          <path d="M9 21l1-8 9-11 3 6v5l-8 7z" fill="#dc2222" />
          <path d="M12 12l7-10 1 4-6 9z" fill="#ff8e80" />
          <path d="M9 21l1-7 5 5z" fill="#f0c890" />
        </svg>
      </button>
      <div className="ml-auto flex items-center">
        <button aria-label="No preview">
          <svg viewBox="0 0 24 24" className="size-6" fill="none" stroke="#777">
            <path d="M4 12l5-9 6-1.500 5 4-1 8-8 3z" fill="#e4e4e4" />
            <ellipse cx="16" cy="6" rx="4" ry="3" fill="#bbb" />
            <ellipse cx="12" cy="17.500" rx="8.500" ry="4.500" fill="#2e2e2e" stroke="#111" />
          </svg>
        </button>
        <button aria-label="Wireframe" className="ml-[5px]">
          <svg viewBox="0 0 24 24" className="size-6" fill="none" stroke="#333" strokeWidth="1.200">
            <path d="M2 14 11 2.500l7-1 4 5v5L12 21l-6 1.500-4-4z" fill="#fff" />
            <ellipse cx="16.500" cy="7.500" rx="5.500" ry="4.500" transform="rotate(40 16 7)" />
            <ellipse cx="16.500" cy="7.500" rx="3" ry="2" transform="rotate(40 16 7)" />
            <ellipse cx="7.500" cy="16.500" rx="3.500" ry="5.500" transform="rotate(-35 7 16)" />
          </svg>
        </button>
        <button aria-label="Shaded" className="ml-[3px] border border-[#3c96e8] bg-[#f0f6fc] p-px">
          <svg viewBox="0 0 24 24" className="size-6" fill="none">
            <path d="M1.500 12 10 2.500l7-1 6 6v5L13 21l-6 1.500-5-6z" fill="#b81414" stroke="#5a0404" />
            <path d="M2.500 12l8-9 5 1L6 15z" fill="#e85050" />
            <ellipse cx="17" cy="7" rx="5.500" ry="4.500" fill="#cc2a2a" stroke="#6a0808" transform="rotate(40 17 7)" />
            <ellipse cx="17.500" cy="7" rx="2.500" ry="1.800" fill="#4a0202" transform="rotate(40 17 7)" />
          </svg>
        </button>
        <div className="mx-[8px] h-5 w-px bg-[#bbb]" />
        <button aria-label="Selected only" className="ml-px">
          <svg viewBox="0 0 24 24" className="size-6" fill="none">
            <path d="M2 14l6-6 9 9-5 5c-6 1-10-3-10-8z" fill="#d6d6d6" stroke="#777" />
            <path d="M7 8l6-6 5 0 5 5v4l-6 6z" fill="#5aa91c" stroke="#23500a" />
            <ellipse cx="17.500" cy="7" rx="4.500" ry="3" fill="#2f6b0c" transform="rotate(40 17 7)" />
            <path d="M2 4l17 17" stroke="#111" strokeWidth="1.500" />
          </svg>
        </button>
        <button aria-label="Custom colours" className="ml-[4px]">
          <svg viewBox="0 0 24 24" className="size-6" fill="none">
            <ellipse cx="13" cy="20" rx="9" ry="2.500" fill="#ccc" />
            <circle cx="12" cy="11.500" r="9.500" fill="#e2e2e2" stroke="#555" />
            <path d="M12 2a9.500 9.500 0 0 0 0 19z" fill="#e88a1c" stroke="#7a3a08" />
            <path d="M4 15a9 9 0 0 0 8 6v-8z" fill="#a8480c" />
          </svg>
        </button>
        <div className="mx-[5px] h-5 w-px bg-[#bbb]" />
        <button aria-label="Mesh quality" className="flex items-center gap-[2px]">
          <svg viewBox="0 0 24 24" className="size-6" fill="none">
            <path d="M7 4l7-1.500 6 4 1 6-4 6-7 2-6-4-1-6z" fill="#4f9fe8" stroke="#0e2a6a" strokeWidth="1.300" />
            <path d="M8 5l6-1 1 6-7 4-3-4z" fill="#b8e2ff" />
          </svg>
          <svg viewBox="0 0 5 3" className="h-[3px] w-[5px]"><path d="M0 0h5L2.500 3z" /></svg>
        </button>
      </div>
    </div>
    <Canvas />
    <footer className={`h-[12px] shrink-0 border-t-2 border-white bg-gradient-to-r from-[#ededed] to-white pt-[6px] pr-[17px] text-right text-[11px] leading-[13px] text-[#777] ${ARIAL}`}>
      0.9.0076
    </footer>
  </section>
);

const App: React.FC = () => (
  <div className="relative h-screen overflow-hidden">
    <Rhino />
    <Grasshopper />
  </div>
);

export default App;
